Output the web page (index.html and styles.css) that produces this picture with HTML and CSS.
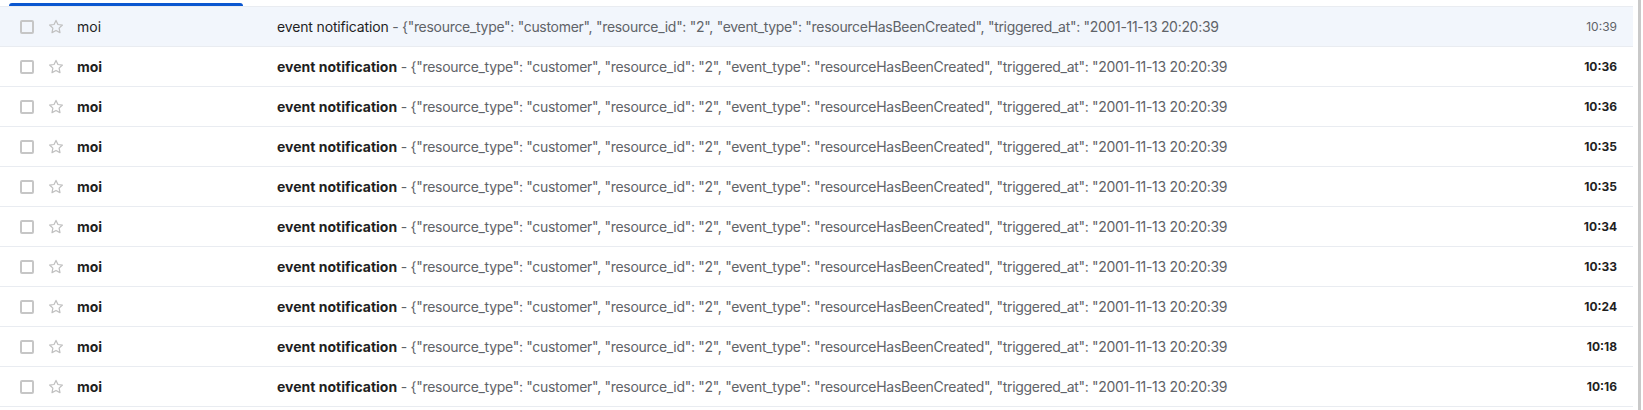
FILE: index.html
```html
<!DOCTYPE html>
<html lang="fr">
<head>
<meta charset="utf-8">
<title>Inbox</title>
<link rel="stylesheet" href="styles.css">
</head>
<body>
<div class="page">
  <main class="main">
    <div class="tabbar"><div class="tab-indicator"></div></div>
    <div class="list">
      <div class="row read">
        <span class="check"></span>
        <svg class="star" viewBox="0 0 16 16"><path d="M8 1.4l1.95 4.1 4.45.55-3.28 3.1.85 4.45L8 11.45 4.03 13.6l.85-4.45L1.6 6.050l4.45-.55z"/></svg>
        <span class="sender">moi</span>
        <span class="subject"><span class="title">event notification</span><span class="snippet"> - {"resource_type": "customer", "resource_id": "2", "event_type": "resourceHasBeenCreated", "triggered_at": "2001-11-13 20:20:39</span></span>
        <span class="time">10:39</span>
      </div>
      <div class="row unread">
        <span class="check"></span>
        <svg class="star" viewBox="0 0 16 16"><path d="M8 1.4l1.95 4.1 4.45.55-3.28 3.1.85 4.45L8 11.45 4.03 13.6l.85-4.45L1.6 6.05l4.45-.55z"/></svg>
        <span class="sender">moi</span>
        <span class="subject"><span class="title">event notification</span><span class="snippet"> - {"resource_type": "customer", "resource_id": "2", "event_type": "resourceHasBeenCreated", "triggered_at": "2001-11-13 20:20:39</span></span>
        <span class="time">10:36</span>
      </div>
      <div class="row unread">
        <span class="check"></span>
        <svg class="star" viewBox="0 0 16 16"><path d="M8 1.4l1.95 4.1 4.45.55-3.28 3.1.85 4.45L8 11.45 4.03 13.6l.85-4.45L1.6 6.05l4.45-.55z"/></svg>
        <span class="sender">moi</span>
        <span class="subject"><span class="title">event notification</span><span class="snippet"> - {"resource_type": "customer", "resource_id": "2", "event_type": "resourceHasBeenCreated", "triggered_at": "2001-11-13 20:20:39</span></span>
        <span class="time">10:36</span>
      </div>
      <div class="row unread">
        <span class="check"></span>
        <svg class="star" viewBox="0 0 16 16"><path d="M8 1.4l1.95 4.1 4.45.55-3.28 3.1.85 4.45L8 11.45 4.03 13.6l.85-4.45L1.6 6.05l4.45-.55z"/></svg>
        <span class="sender">moi</span>
        <span class="subject"><span class="title">event notification</span><span class="snippet"> - {"resource_type": "customer", "resource_id": "2", "event_type": "resourceHasBeenCreated", "triggered_at": "2001-11-13 20:20:39</span></span>
        <span class="time">10:35</span>
      </div>
      <div class="row unread">
        <span class="check"></span>
        <svg class="star" viewBox="0 0 16 16"><path d="M8 1.4l1.95 4.1 4.45.55-3.28 3.1.85 4.45L8 11.45 4.03 13.6l.85-4.45L1.6 6.05l4.45-.55z"/></svg>
        <span class="sender">moi</span>
        <span class="subject"><span class="title">event notification</span><span class="snippet"> - {"resource_type": "customer", "resource_id": "2", "event_type": "resourceHasBeenCreated", "triggered_at": "2001-11-13 20:20:39</span></span>
        <span class="time">10:35</span>
      </div>
      <div class="row unread">
        <span class="check"></span>
        <svg class="star" viewBox="0 0 16 16"><path d="M8 1.4l1.95 4.1 4.45.55-3.28 3.1.85 4.45L8 11.45 4.03 13.6l.85-4.45L1.6 6.05l4.45-.55z"/></svg>
        <span class="sender">moi</span>
        <span class="subject"><span class="title">event notification</span><span class="snippet"> - {"resource_type": "customer", "resource_id": "2", "event_type": "resourceHasBeenCreated", "triggered_at": "2001-11-13 20:20:39</span></span>
        <span class="time">10:34</span>
      </div>
      <div class="row unread">
        <span class="check"></span>
        <svg class="star" viewBox="0 0 16 16"><path d="M8 1.4l1.95 4.1 4.45.55-3.28 3.1.85 4.45L8 11.45 4.03 13.6l.85-4.45L1.6 6.05l4.45-.55z"/></svg>
        <span class="sender">moi</span>
        <span class="subject"><span class="title">event notification</span><span class="snippet"> - {"resource_type": "customer", "resource_id": "2", "event_type": "resourceHasBeenCreated", "triggered_at": "2001-11-13 20:20:39</span></span>
        <span class="time">10:33</span>
      </div>
      <div class="row unread">
        <span class="check"></span>
        <svg class="star" viewBox="0 0 16 16"><path d="M8 1.4l1.95 4.1 4.45.55-3.28 3.1.85 4.45L8 11.45 4.03 13.6l.85-4.45L1.6 6.05l4.45-.55z"/></svg>
        <span class="sender">moi</span>
        <span class="subject"><span class="title">event notification</span><span class="snippet"> - {"resource_type": "customer", "resource_id": "2", "event_type": "resourceHasBeenCreated", "triggered_at": "2001-11-13 20:20:39</span></span>
        <span class="time">10:24</span>
      </div>
      <div class="row unread">
        <span class="check"></span>
        <svg class="star" viewBox="0 0 16 16"><path d="M8 1.4l1.95 4.1 4.45.55-3.28 3.1.85 4.45L8 11.45 4.03 13.6l.85-4.45L1.6 6.05l4.45-.55z"/></svg>
        <span class="sender">moi</span>
        <span class="subject"><span class="title">event notification</span><span class="snippet"> - {"resource_type": "customer", "resource_id": "2", "event_type": "resourceHasBeenCreated", "triggered_at": "2001-11-13 20:20:39</span></span>
        <span class="time">10:18</span>
      </div>
      <div class="row unread">
        <span class="check"></span>
        <svg class="star" viewBox="0 0 16 16"><path d="M8 1.4l1.95 4.1 4.45.55-3.28 3.1.85 4.45L8 11.45 4.03 13.6l.85-4.45L1.6 6.05l4.45-.55z"/></svg>
        <span class="sender">moi</span>
        <span class="subject"><span class="title">event notification</span><span class="snippet"> - {"resource_type": "customer", "resource_id": "2", "event_type": "resourceHasBeenCreated", "triggered_at": "2001-11-13 20:20:39</span></span>
        <span class="time">10:16</span>
      </div>
    </div>
  </main>
  <div class="scrollbar"></div>
</div>
</body>
</html>
```

FILE: styles.css
```css
* { box-sizing: border-box; }
html, body { margin: 0; padding: 0; background: #fff; }
body {
  font-family: Inter, Roboto, "Liberation Sans", Arial, sans-serif;
  font-size: 14px;
  color: #1f1f1f;
  width: 1643px;
  height: 410px;
  overflow: hidden;
}
.page {
  display: flex;
  height: 410px;
}
.main {
  width: 1633px;
  flex: none;
}
.scrollbar {
  width: 3px;
  margin-left: 5px;
  height: 410px;
  background: #c9c9c9;
}
.tabbar {
  height: 6px;
  display: flex;
  align-items: flex-end;
  padding-left: 9px;
}
.tab-indicator {
  width: 234px;
  height: 3px;
  background: #0b57d0;
  border-radius: 3px 3px 0 0;
}
.list {
  border-top: 1px solid #e9ecf1;
}
.row {
  height: 40px;
  display: flex;
  align-items: center;
  padding: 0 16px 0 20px;
  border-bottom: 1px solid #e9ecf1;
  white-space: nowrap;
}
.row.read { background: #f2f6fc; }
.check {
  width: 14px;
  height: 14px;
  border: 2px solid #c6c6c6;
  border-radius: 2px;
  flex: none;
  margin-right: 14px;
}
.star {
  width: 16px;
  height: 16px;
  flex: none;
  margin-right: 13px;
  fill: none;
  stroke: #c0c0c0;
  stroke-width: 1.25;
  stroke-linejoin: round;
}
.sender {
  width: 200px;
  flex: none;
}
.subject {
  flex: 1;
  overflow: hidden;
}
.title { letter-spacing: -0.15px; }
.snippet {
  color: #5f6368;
  letter-spacing: -0.3px;
}
.time {
  font-size: 12px;
  margin-left: 16px;
  flex: none;
}
.unread .sender, .unread .title, .unread .time {
  font-weight: 700;
  color: #1f1f1f;
}
.unread .title { letter-spacing: 0; }
.read .time { color: #5f6368; }
```
